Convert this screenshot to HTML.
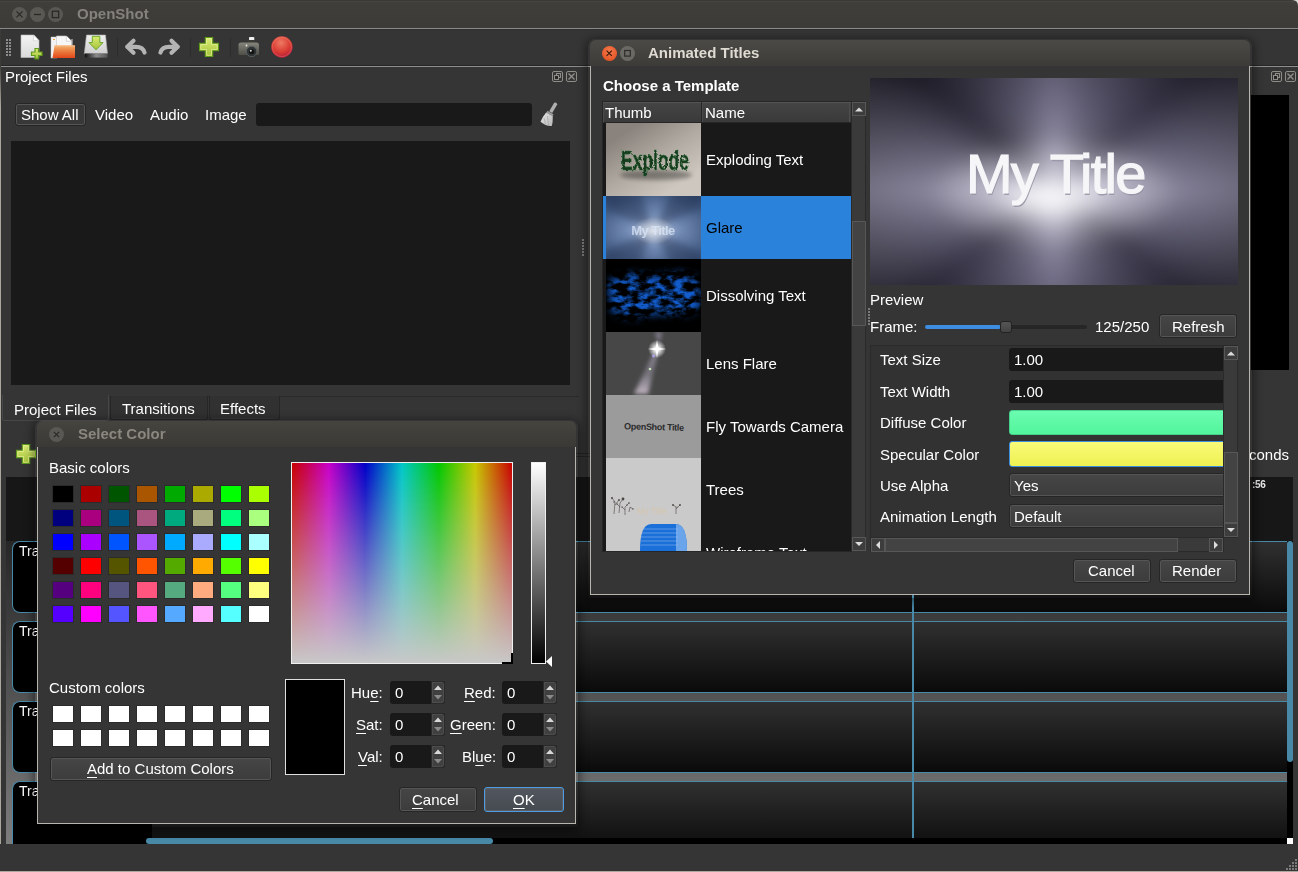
<!DOCTYPE html><html><head><meta charset="utf-8"><title>OpenShot</title><style>
*{margin:0;padding:0;box-sizing:border-box}
html,body{width:1298px;height:872px;overflow:hidden}
body{background:#353535;font-family:"Liberation Sans",sans-serif;font-size:15px;color:#fff;position:relative;line-height:17px}
.a{position:absolute}
.t{position:absolute;white-space:nowrap;line-height:17px;will-change:transform}
.b{font-weight:bold}
u{text-decoration:underline;text-underline-offset:2.5px;text-decoration-thickness:1px}
</style></head><body>
<div class="a" style="left:0px;top:0px;width:1298px;height:28px;background:linear-gradient(#3a3935 0px,#3a3935 1px,#46453f 1px,#46453f 2px,#3f3e3a 2px,#3c3b37 28px);border-radius:0 6px 0 0"></div>
<svg class="a" style="left:1290px;top:0" width="8" height="8"><path d="M2 0 H8 V6 Q8 0 2 0Z" fill="#d8d8d8"/></svg>
<div class="a" style="left:12.0px;top:6.9px;width:15px;height:15px;border-radius:50%;background:#5a5853"></div>
<div class="a" style="left:30.0px;top:6.9px;width:15px;height:15px;border-radius:50%;background:#5a5853"></div>
<div class="a" style="left:48.0px;top:6.9px;width:15px;height:15px;border-radius:50%;background:#5a5853"></div>
<svg class="a" style="left:0;top:0" width="70" height="28"><g stroke="#2a2926" stroke-width="1.3" fill="none"><path d="M16.5 11.4 L22.5 17.4 M22.5 11.4 L16.5 17.4"/><path d="M34 14.5 H41"/><rect x="52.3" y="11.2" width="6.4" height="6.4"/></g></svg>
<div class="t b" style="left:77px;top:5px;color:#85827d">OpenShot</div>
<div class="a" style="left:0px;top:28px;width:1298px;height:1px;background:#8a8a8a"></div>
<div class="a" style="left:0px;top:65px;width:1298px;height:1px;background:#262626"></div>
<div class="a" style="left:0px;top:66px;width:1298px;height:1px;background:#8e8e8e"></div>
<div class="a" style="left:0px;top:29px;width:1298px;height:1px;background:#2f2f2f"></div>
<div class="a" style="left:0px;top:29px;width:1px;height:38px;background:#3c3b37"></div>
<div class="a" style="left:0px;top:67px;width:1px;height:40px;background:linear-gradient(#46443f,#aca79e)"></div>
<div class="a" style="left:0px;top:107px;width:1px;height:765px;background:#aca79e"></div>
<svg class="a" style="left:0;top:29px" width="300" height="37" viewBox="0 29 300 37">
<defs>
<linearGradient id="gpage" x1="0" y1="0" x2="0" y2="1"><stop offset="0" stop-color="#f4f4f4"/><stop offset="1" stop-color="#dadada"/></linearGradient>
<linearGradient id="gplus" x1="0" y1="0" x2="0" y2="1"><stop offset="0" stop-color="#dbec74"/><stop offset="1" stop-color="#a4c23a"/></linearGradient>
<linearGradient id="gfold" x1="0" y1="0" x2="0" y2="1"><stop offset="0" stop-color="#f3b77a"/><stop offset="0.35" stop-color="#ee8a4a"/><stop offset="1" stop-color="#e4461a"/></linearGradient>
<linearGradient id="gdrive" x1="0" y1="0" x2="0" y2="1"><stop offset="0" stop-color="#f0f0f0"/><stop offset="1" stop-color="#cfcfcf"/></linearGradient>
<linearGradient id="gband" x1="0" y1="0" x2="1" y2="0"><stop offset="0" stop-color="#111"/><stop offset="0.5" stop-color="#8a8a8a"/><stop offset="1" stop-color="#555"/></linearGradient>
<radialGradient id="gred" cx="0.45" cy="0.3" r="0.75"><stop offset="0" stop-color="#ee7a62"/><stop offset="0.6" stop-color="#d93a32"/><stop offset="1" stop-color="#b0183e"/></radialGradient>
<linearGradient id="gcam" x1="0" y1="0" x2="0" y2="1"><stop offset="0" stop-color="#85857c"/><stop offset="1" stop-color="#4e4e48"/></linearGradient>
</defs>
<g fill="#8c8c8c"><rect x="6" y="39" width="2" height="2"/><rect x="9" y="39" width="2" height="2"/><rect x="6" y="42" width="2" height="2"/><rect x="9" y="42" width="2" height="2"/><rect x="6" y="45" width="2" height="2"/><rect x="9" y="45" width="2" height="2"/><rect x="6" y="48" width="2" height="2"/><rect x="9" y="48" width="2" height="2"/><rect x="6" y="51" width="2" height="2"/><rect x="9" y="51" width="2" height="2"/><rect x="6" y="54" width="2" height="2"/><rect x="9" y="54" width="2" height="2"/></g>
<path d="M21 35 H34 L39 40.5 V57.5 H21 Z" fill="url(#gpage)" stroke="#bdbdbd" stroke-width="0.6"/>
<path d="M33.5 35 V40.8 H39 Z" fill="#fff" stroke="#c8c8c8" stroke-width="0.6"/>
<path d="M35 48.5 H38.5 V52 H42 V55.5 H38.5 V58.8 H35 V55.5 H31.5 V52 H35 Z" fill="url(#gplus)" stroke="#5f9a1c" stroke-width="1.2"/>
<path d="M51 37 H57 V58 H51 Z" fill="#f2f2f2" stroke="#c4c4c4" stroke-width="0.5"/>
<path d="M56.5 36 H66.5 L71.5 41 V50 H56.5 Z" fill="#f7f7f7" stroke="#c8c8c8" stroke-width="0.6"/>
<path d="M66.3 36 V41.2 H71.5" fill="#fff" stroke="#bdbdbd" stroke-width="0.6"/>
<rect x="71.5" y="39" width="1" height="11" fill="#d8d8d8"/>
<rect x="53" y="39" width="2" height="0.9" fill="#f0a030"/>
<path d="M54.5 45.2 H75 V58 H52.5 Z" fill="url(#gfold)"/>
<path d="M55 46 H74.5" stroke="#f8c890" stroke-width="0.8" opacity="0.8"/>
<path d="M86.5 35 H105.5 L107.5 53.6 H84.3 Z" fill="url(#gdrive)" stroke="#aaa" stroke-width="0.6"/>
<ellipse cx="96" cy="47" rx="9" ry="5" fill="none" stroke="#d8d8d8" stroke-width="1"/>
<rect x="85" y="53.6" width="22.5" height="4" fill="url(#gband)"/>
<path d="M92.3 36.3 H99.8 V42.6 H103 L96 49.8 L89 42.6 H92.3 Z" fill="url(#gplus)" stroke="#6aa82a" stroke-width="1"/>
<rect x="117" y="38" width="1" height="19" fill="#2c2c2c"/>
<rect x="190" y="38" width="1" height="19" fill="#2c2c2c"/>
<rect x="230" y="38" width="1" height="19" fill="#2c2c2c"/>
<g fill="none" stroke="#b4b4b4" stroke-width="4.2" stroke-linecap="round" stroke-linejoin="round">
<path d="M127.5 46.8 H136 Q143 46.8 144.5 52.5"/><path d="M133.5 40.8 L127.3 46.8 L133.5 52.8"/>
<path d="M177.5 46.8 H169 Q162 46.8 160.5 52.5"/><path d="M171.5 40.8 L177.7 46.8 L171.5 52.8"/>
</g>
<path d="M205.3 37.5 H212.7 V43.3 H218.5 V50.7 H212.7 V56.5 H205.3 V50.7 H199.5 V43.3 H205.3 Z" fill="url(#gplus)" stroke="#5f9a1c" stroke-width="1.1"/>
<path d="M206.5 38.8 H211.5 V44.5 H217.2 V49.5 H211.5 V55.3 H206.5 V49.5 H200.8 V44.5 H206.5 Z" fill="none" stroke="#eef7a8" stroke-width="0.7" opacity="0.8"/>
<rect x="249" y="37" width="5.3" height="3.3" rx="0.8" fill="#eee"/>
<rect x="248" y="40" width="7" height="2.5" fill="#3a3a36"/>
<path d="M238.5 44.5 Q238.5 42.5 241 42.5 H256.5 Q259 42.5 259 45 V54 Q259 55 258 55 H239.5 Q238.5 55 238.5 54 Z" fill="url(#gcam)"/>
<circle cx="251.6" cy="51.5" r="5.2" fill="#2e3436" stroke="#5a5f60" stroke-width="1"/>
<circle cx="251.6" cy="51.5" r="2.6" fill="#111"/>
<circle cx="250.8" cy="50.8" r="1" fill="#ddd"/>
<circle cx="246.5" cy="45.5" r="0.9" fill="#eee"/>
<circle cx="281.9" cy="47" r="10.7" fill="url(#gred)"/>
<circle cx="281.9" cy="47" r="9.6" fill="none" stroke="#f7a090" stroke-width="0.5" opacity="0.6"/>
</svg>
<div class="t " style="left:5px;top:68px;">Project Files</div>
<svg class="a" style="left:552px;top:70px" width="27" height="14"><g fill="none" stroke="#8e8d88" stroke-width="1"><rect x="0.5" y="1.5" width="10" height="10" rx="1.5"/><rect x="4.5" y="3.5" width="4" height="4"/><rect x="2.5" y="5.5" width="4" height="4" fill="#262626"/><rect x="14.5" y="1.5" width="10" height="10" rx="1.5"/><path d="M16.5 3.5 L22.5 9.5 M22.5 3.5 L16.5 9.5" stroke-width="1.4"/></g></svg>
<svg class="a" style="left:1271px;top:70px" width="27" height="14"><g fill="none" stroke="#8e8d88" stroke-width="1"><rect x="0.5" y="1.5" width="10" height="10" rx="1.5"/><rect x="4.5" y="3.5" width="4" height="4"/><rect x="2.5" y="5.5" width="4" height="4" fill="#262626"/><rect x="14.5" y="1.5" width="10" height="10" rx="1.5"/><path d="M16.5 3.5 L22.5 9.5 M22.5 3.5 L16.5 9.5" stroke-width="1.4"/></g></svg>
<svg class="a" style="left:582px;top:239px" width="2" height="17"><g fill="#7a7a7a"><rect x="0" y="0" width="2" height="2"/><rect x="0" y="3" width="2" height="2"/><rect x="0" y="6" width="2" height="2"/><rect x="0" y="9" width="2" height="2"/><rect x="0" y="12" width="2" height="2"/><rect x="0" y="15" width="2" height="2"/></g></svg>
<div class="a" style="left:15px;top:103px;width:71px;height:23px;background:#383838;border:1px solid #262626;box-shadow:inset 0 0 0 1px #555;border-radius:3px"></div>
<div class="t " style="left:21px;top:106px;">Show All</div>
<div class="t " style="left:95px;top:106px;">Video</div>
<div class="t " style="left:150px;top:106px;">Audio</div>
<div class="t " style="left:205px;top:106px;">Image</div>
<div class="a" style="left:256px;top:103px;width:276px;height:23px;background:#191919;border-radius:3px"></div>
<div class="a" style="left:11px;top:141px;width:559px;height:244px;background:#191919"></div>
<div class="a" style="left:108px;top:396px;width:471px;height:1px;background:#2b2b2b"></div>
<div class="a" style="left:2px;top:395px;width:107px;height:26px;border:1px solid #474747;border-top:none;border-radius:0 0 3px 3px;background:#353535"></div>
<div class="a" style="left:110px;top:396px;width:98px;height:24px;border:1px solid #262626;border-top:none;border-radius:0 0 3px 3px;background:#313131;box-shadow:inset 0 -1px 0 #3a3a3a"></div>
<div class="a" style="left:209px;top:396px;width:71px;height:24px;border:1px solid #262626;border-top:none;border-radius:0 0 3px 3px;background:#313131;box-shadow:inset 0 -1px 0 #3a3a3a"></div>
<div class="t " style="left:14px;top:401px;">Project Files</div>
<div class="t " style="left:122px;top:400px;">Transitions</div>
<div class="t " style="left:220px;top:400px;">Effects</div>
<svg class="a" style="left:536px;top:100px" width="26" height="28" viewBox="536 100 26 28"><defs><linearGradient id="brg" x1="0" y1="0" x2="1" y2="1"><stop offset="0" stop-color="#e6e6e6"/><stop offset="1" stop-color="#b8b8b8"/></linearGradient></defs>
<path d="M554.2 102.8 Q556.8 102 557.2 104.5 L552.2 113 L549.2 111.2 Z" fill="#b0b0b0"/>
<path d="M547.5 110.8 L553.5 114.2 L552.6 116.2 L546.3 112.6 Z" fill="#9a9a9a"/>
<path d="M546.2 112.5 L552.8 116.3 Q553 122 551.8 126 Q546 126.5 540.5 121.8 Q543 116 546.2 112.5 Z" fill="url(#brg)"/>
<path d="M544 118 L545.5 124 M547.5 116 L548.5 125" stroke="#9a9a9a" stroke-width="0.6"/>
</svg>
<svg class="a" style="left:15px;top:443px" width="22" height="22" viewBox="15 443 22 22"><defs><linearGradient id="gplus2" x1="0" y1="0" x2="0" y2="1"><stop offset="0" stop-color="#dbec74"/><stop offset="1" stop-color="#a4c23a"/></linearGradient></defs>
<path d="M22.3 444.5 H29.7 V450.3 H35.5 V457.7 H29.7 V463.5 H22.3 V457.7 H16.5 V450.3 H22.3 Z" fill="url(#gplus2)" stroke="#5f9a1c" stroke-width="1.1"/>
<path d="M23.5 445.8 H28.5 V451.5 H34.2 V456.5 H28.5 V462.3 H23.5 V456.5 H17.8 V451.5 H23.5 Z" fill="none" stroke="#eef7a8" stroke-width="0.7" opacity="0.8"/></svg>
<div class="a" style="left:1251px;top:95px;width:38px;height:275px;background:#000"></div>
<div class="a" style="left:6px;top:477px;width:1287px;height:367px;background:linear-gradient(#141414,#7d7d7d)"></div>
<div class="a" style="left:6px;top:477px;width:1287px;height:64px;background:#171717"></div>
<div class="a" style="left:146px;top:541px;width:1141px;height:72px;background:linear-gradient(#303030 0px,#0a0a0a 70px);border-top:1px solid #4889a8;border-bottom:1px solid #4889a8;"></div>
<div class="a" style="left:12px;top:541px;width:140px;height:72px;background:#000;border:1px solid #4889a8;border-right:none;border-radius:8px 0 0 8px"></div>
<div class="t " style="left:19px;top:543px;font-size:14px">Tra</div>
<div class="a" style="left:146px;top:621px;width:1141px;height:72px;background:linear-gradient(#303030 0px,#0a0a0a 70px);border-top:1px solid #4889a8;border-bottom:1px solid #4889a8;"></div>
<div class="a" style="left:12px;top:621px;width:140px;height:72px;background:#000;border:1px solid #4889a8;border-right:none;border-radius:8px 0 0 8px"></div>
<div class="t " style="left:19px;top:623px;font-size:14px">Tra</div>
<div class="a" style="left:146px;top:701px;width:1141px;height:72px;background:linear-gradient(#303030 0px,#0a0a0a 70px);border-top:1px solid #4889a8;border-bottom:1px solid #4889a8;"></div>
<div class="a" style="left:12px;top:701px;width:140px;height:72px;background:#000;border:1px solid #4889a8;border-right:none;border-radius:8px 0 0 8px"></div>
<div class="t " style="left:19px;top:703px;font-size:14px">Tra</div>
<div class="a" style="left:146px;top:781px;width:1141px;height:63px;background:linear-gradient(#303030 0px,#0a0a0a 70px);border-top:1px solid #4889a8;"></div>
<div class="a" style="left:12px;top:781px;width:140px;height:63px;background:#000;border:1px solid #4889a8;border-right:none;border-bottom:none;border-radius:8px 0 0 0"></div>
<div class="t " style="left:19px;top:783px;font-size:14px">Tra</div>
<div class="a" style="left:912px;top:541px;width:2px;height:303px;background:#4889a8"></div>
<div class="a" style="left:1287px;top:541px;width:6px;height:303px;background:#000"></div>
<div class="a" style="left:1287px;top:541px;width:6px;height:221px;background:#4889a8;border-radius:3px"></div>
<div class="a" style="left:146px;top:838px;width:1141px;height:6px;background:#000"></div>
<div class="a" style="left:146px;top:838px;width:347px;height:6px;background:#4889a8;border-radius:3px"></div>
<div class="a" style="left:1287px;top:838px;width:6px;height:6px;background:#fff"></div>
<div class="t " style="left:1249px;top:446px;">conds</div>
<div class="a" style="left:576px;top:453px;width:14px;height:1px;background:#262626"></div>
<div class="a" style="left:576px;top:456px;width:14px;height:1px;background:#262626"></div>
<div class="t " style="left:1252px;top:476px;font-size:10px;font-weight:bold;color:#e8e8e8;letter-spacing:-0.3px">:56</div>
<div class="a" style="left:0px;top:844px;width:1298px;height:28px;background:#353535"></div>
<div class="a" style="left:0px;top:871px;width:1298px;height:1px;background:#aca79e"></div>
<svg class="a" style="left:1280px;top:855px" width="18" height="16" viewBox="1280 855 18 16"><g fill="#7a7a7a"><rect x="1295" y="859" width="2" height="2"/><rect x="1295" y="862" width="2" height="2"/><rect x="1292" y="862" width="2" height="2"/><rect x="1295" y="865" width="2" height="2"/><rect x="1292" y="865" width="2" height="2"/><rect x="1289" y="865" width="2" height="2"/><rect x="1295" y="868" width="2" height="2"/><rect x="1292" y="868" width="2" height="2"/><rect x="1289" y="868" width="2" height="2"/><rect x="1286" y="868" width="2" height="2"/></g></svg>
<div class="a" style="left:588px;top:39px;width:664px;height:559px;border-radius:7px 7px 2px 2px;box-shadow:0 2px 10px 2px rgba(0,0,0,.45)"></div>
<div class="a" style="left:590px;top:40px;width:660px;height:26px;background:linear-gradient(#4b4a46,#3c3b37);border-radius:6px 6px 0 0"></div>
<div class="a" style="left:590px;top:66px;width:660px;height:529px;background:#353535;border-left:1px solid #b8b5ae;border-right:1px solid #b8b5ae;border-bottom:1px solid #b8b5ae"></div>
<div class="a" style="left:601.7px;top:45.8px;width:15px;height:15px;border-radius:50%;background:radial-gradient(circle at 50% 35%,#f47a4d,#e0491a)"></div>
<div class="a" style="left:620.0px;top:45.8px;width:15px;height:15px;border-radius:50%;background:#6b6964"></div>
<div class="t b" style="left:648px;top:44px;color:#dfdbd2">Animated Titles</div>
<svg class="a" style="left:600px;top:44px" width="40" height="20"><g stroke="#3a1a0a" stroke-width="1.2" fill="none"><path d="M6.6 6.7 L11.8 11.9 M11.8 6.7 L6.6 11.9"/></g><rect x="24.7" y="6.5" width="5.6" height="5.6" fill="none" stroke="#2e2d2a" stroke-width="1.2"/></svg>
<div class="t b" style="left:603px;top:77px;">Choose a Template</div>
<div class="a" style="left:602px;top:101px;width:250px;height:451px;background:#191919;border:1px solid #262626"></div>
<div class="a" style="left:603px;top:102px;width:248px;height:21px;background:linear-gradient(#444,#3a3a3a);border-top:1px solid #545454;border-left:1px solid #4a4a4a;border-bottom:1px solid #262626"></div>
<div class="a" style="left:701px;top:102px;width:1px;height:21px;background:#262626"></div>
<div class="a" style="left:702px;top:103px;width:1px;height:19px;background:#4a4a4a"></div>
<div class="a" style="left:849px;top:103px;width:1px;height:19px;background:#4e4e4e"></div>
<div class="t " style="left:605px;top:104px;">Thumb</div>
<div class="t " style="left:705px;top:104px;">Name</div>
<div class="a" style="left:603px;top:123px;width:248px;height:428px;overflow:hidden">
<div class="a" style="left:3px;top:0px;width:95px;height:73px;overflow:hidden"><svg width="95" height="73" viewBox="0 0 95 73"><defs><linearGradient id="exbg" x1="0" y1="0.3" x2="0.6" y2="1"><stop offset="0" stop-color="#8a837d"/><stop offset="0.5" stop-color="#b0a9a1"/><stop offset="1" stop-color="#cdc7bf"/></linearGradient>
<filter id="exf" x="-10%" y="-20%" width="120%" height="140%"><feTurbulence type="fractalNoise" baseFrequency="0.35" numOctaves="2" seed="5" result="n"/><feDisplacementMap in="SourceGraphic" in2="n" scale="3.5"/></filter>
<filter id="exs" x="-20%" y="-50%" width="140%" height="200%"><feGaussianBlur stdDeviation="2.2"/></filter></defs>
<rect width="95" height="73" fill="url(#exbg)"/>
<ellipse cx="50" cy="52" rx="36" ry="5" fill="#000" opacity="0.35" filter="url(#exs)"/>
<text x="15" y="47" textLength="68" lengthAdjust="spacingAndGlyphs" font-family="Liberation Sans" font-weight="bold" font-size="27" fill="#163a1e" stroke="#2f6a3a" stroke-width="0.7" filter="url(#exf)">Explode</text>
</svg></div>
<div class="t" style="left:103px;top:27.5px;color:#fff">Exploding Text</div>
<div class="a" style="left:0;top:73px;width:248px;height:63px;background:#2a82da"></div>
<div class="a" style="left:3px;top:73px;width:95px;height:63px;overflow:hidden"><svg width="95" height="63" viewBox="0 0 95 63"><defs><radialGradient id="glb" cx="0.5" cy="0.55" r="0.75"><stop offset="0" stop-color="#b8c8e4"/><stop offset="0.4" stop-color="#6f88b2"/><stop offset="1" stop-color="#2e466c"/></radialGradient>
<radialGradient id="glw" cx="0.5" cy="0.55" r="0.22"><stop offset="0" stop-color="#fff" stop-opacity="0.7"/><stop offset="1" stop-color="#fff" stop-opacity="0"/></radialGradient>
<filter id="glf" x="-20%" y="-20%" width="140%" height="140%"><feGaussianBlur stdDeviation="4"/></filter></defs>
<rect width="95" height="63" fill="url(#glb)"/>
<path d="M47.5 34 L0 14 V-5 H34 Z M47.5 34 L95 12 V-5 H66 Z M47.5 34 L0 54 V68 H34Z M47.5 34 L95 56 V68 H64Z" fill="#1a2a48" opacity="0.45" filter="url(#glf)"/>
<rect width="95" height="63" fill="url(#glw)"/>
<text x="47" y="39" text-anchor="middle" font-family="Liberation Sans" font-weight="bold" font-size="13" fill="#dbe6f8" opacity="0.75" letter-spacing="-0.6">My Title</text>
</svg></div>
<div class="t" style="left:103px;top:95.5px;color:#000">Glare</div>
<div class="a" style="left:3px;top:136px;width:95px;height:73px;overflow:hidden"><svg width="95" height="73" viewBox="0 0 95 73"><defs>
<filter id="dsf" x="-10%" y="-40%" width="120%" height="180%" color-interpolation-filters="sRGB"><feGaussianBlur in="SourceGraphic" stdDeviation="4" result="m"/><feTurbulence type="fractalNoise" baseFrequency="0.09 0.16" numOctaves="4" seed="21" result="n"/><feColorMatrix in="n" values="0 0 0 0 0.07  0 0 0 0 0.36  0 0 0 0 0.8  0 0 0 3.5 -1.35" result="c"/><feComposite in="c" in2="m" operator="in"/></filter></defs>
<rect width="95" height="73" fill="#000"/>
<path d="M2 24 Q20 10 48 18 Q75 8 94 22 L95 48 Q80 60 50 54 Q25 64 6 52 Z" fill="#fff" filter="url(#dsf)"/>
</svg></div>
<div class="t" style="left:103px;top:163.5px;color:#fff">Dissolving Text</div>
<div class="a" style="left:3px;top:209px;width:95px;height:63px;overflow:hidden"><svg width="95" height="63" viewBox="0 0 95 63"><defs><radialGradient id="lfs" cx="0.5" cy="0.5" r="0.5"><stop offset="0" stop-color="#fff"/><stop offset="0.3" stop-color="#fff" stop-opacity="0.85"/><stop offset="1" stop-color="#fff" stop-opacity="0"/></radialGradient>
<linearGradient id="lfr" x1="0" y1="0" x2="0" y2="1"><stop offset="0" stop-color="#d8d0e8" stop-opacity="0.5"/><stop offset="0.5" stop-color="#c8c0d8" stop-opacity="0.35"/><stop offset="1" stop-color="#e0d0e0" stop-opacity="0.8"/></linearGradient>
<filter id="lfb" x="-50%" y="-20%" width="200%" height="140%"><feGaussianBlur stdDeviation="2.2"/></filter></defs>
<rect width="95" height="63" fill="#474747"/>
<path d="M49 0 L56 0 L53 12 Z" fill="#a098b0" opacity="0.7" filter="url(#lfb)"/>
<path d="M48 20 L52 20 L42 62 L28 62 Z" fill="url(#lfr)" filter="url(#lfb)"/>
<circle cx="51" cy="17" r="9" fill="url(#lfs)"/>
<path d="M51 8 L52.3 15.7 L60 17 L52.3 18.3 L51 26 L49.7 18.3 L42 17 L49.7 15.7 Z" fill="#fff"/>
<circle cx="47.5" cy="24" r="1.5" fill="#b0a8ff" opacity="0.8"/>
<circle cx="44" cy="37" r="1.3" fill="#d0f0c0" opacity="0.9"/>
</svg></div>
<div class="t" style="left:103px;top:231.5px;color:#fff">Lens Flare</div>
<div class="a" style="left:3px;top:272px;width:95px;height:63px;overflow:hidden"><svg width="95" height="63" viewBox="0 0 95 63"><rect width="95" height="63" fill="#9b9b9b"/>
<text x="48" y="35" text-anchor="middle" font-family="Liberation Sans" font-weight="bold" font-size="9" fill="#2c2c2c" letter-spacing="-0.3" transform="rotate(1.5 48 32)">OpenShot Title</text></svg></div>
<div class="t" style="left:103px;top:294.5px;color:#fff">Fly Towards Camera</div>
<div class="a" style="left:3px;top:335px;width:95px;height:63px;overflow:hidden"><svg width="95" height="63" viewBox="0 0 95 63"><rect width="95" height="63" fill="#cacaca"/>
<g stroke="#4a4540" stroke-width="0.6" fill="none"><path d="M8 56 L9 44 L6 40 M9 47 L13 42 M13 55 L14 45 L17 41 M14 49 L11 46 M19 57 L19 49 L23 45 M19 52 L16 49 M23 54 L24 49 L27 51 M70 56 L70 49 L67 47 M70 51 L74 47"/></g>
<g fill="#4a4540"><circle cx="6" cy="40" r="1"/><circle cx="8" cy="44" r="0.7"/><circle cx="13" cy="42" r="0.9"/><circle cx="17" cy="41" r="1.4"/><circle cx="11" cy="46" r="0.7"/><circle cx="23" cy="45" r="0.8"/><circle cx="16" cy="49" r="0.7"/><circle cx="21" cy="47" r="0.7"/><circle cx="27" cy="51" r="0.7"/><circle cx="67" cy="47" r="0.9"/><circle cx="74" cy="47" r="0.9"/><circle cx="71" cy="49" r="0.6"/></g>
<text x="46" y="56" text-anchor="middle" font-family="Liberation Sans" font-size="8.5" fill="#d6c6ae">My Title</text></svg></div>
<div class="t" style="left:103px;top:357.5px;color:#fff">Trees</div>
<div class="a" style="left:3px;top:398px;width:95px;height:63px;overflow:hidden"><svg width="95" height="63" viewBox="0 0 95 63"><rect width="95" height="63" fill="#cacaca"/>
<path d="M34 30 Q34 3 45 3 H70 Q81 3 81 30 V63 H34 Z" fill="#1a6fd8"/>
<path d="M70 3 Q81 3 81 30 V63 H70 Z" fill="#6aa4ea"/>
<g stroke="#9cc4f4" stroke-width="0.5"><path d="M36 8 H72 M35 12 H72 M35 16 H72 M35 20 H72 M35 24 H72"/></g>
</svg></div>
<div class="t" style="left:103px;top:420.5px;color:#fff">Wireframe Text</div>
</div>
<div class="a" style="left:851px;top:101px;width:15px;height:450px;background:#3a3a3a;border:1px solid #2a2a2a"></div>
<div class="a" style="left:852px;top:102px;width:14px;height:14px;background:#3d3d3d;border:1px solid #575757"></div>
<svg class="a" style="left:852px;top:102px" width="14" height="14"><path d="M3 9.5 L7 5.5 L11 9.5Z" fill="#dcdcdc"/></svg>
<div class="a" style="left:852px;top:221px;width:14px;height:105px;background:#434343;border:1px solid #575757"></div>
<div class="a" style="left:852px;top:537px;width:14px;height:14px;background:#3d3d3d;border:1px solid #575757"></div>
<svg class="a" style="left:852px;top:537px" width="14" height="14"><path d="M3 5 L7 9 L11 5Z" fill="#dcdcdc"/></svg>
<div class="a" style="left:870px;top:78px;width:368px;height:207px;overflow:hidden;background:#3a3650"><div class="a" style="left:-40px;top:-40px;width:448px;height:287px;filter:blur(9px);background:radial-gradient(ellipse 14% 9% at 49% 56%,rgba(255,255,255,1),rgba(255,255,255,0)),radial-gradient(ellipse 28% 20% at 50% 54%,rgba(240,238,250,.85),rgba(240,238,250,0)),conic-gradient(from 0deg at 50% 53%,rgba(255,255,255,.14) 0deg,rgba(0,0,0,.38) 50deg,rgba(255,255,255,.22) 90deg,rgba(0,0,0,.42) 128deg,rgba(255,255,255,.14) 180deg,rgba(0,0,0,.4) 232deg,rgba(255,255,255,.25) 270deg,rgba(0,0,0,.5) 310deg,rgba(255,255,255,.14) 360deg),radial-gradient(ellipse 62% 62% at 50% 53%,#aca8be,#5e5a78 50%,#201d2a 100%)"></div><div class="t" style="left:96px;top:61px;font-size:56px;line-height:70px;color:#f6f6f8;letter-spacing:-1.8px;-webkit-text-stroke:1.2px #f6f6f8;text-shadow:1px 2px 0 rgba(150,150,165,.9)">My Title</div></div>
<div class="t " style="left:870px;top:291px;">Preview</div>
<svg class="a" style="left:868px;top:308px" width="2" height="17"><g fill="#7a7a7a"><rect x="0" y="0" width="2" height="2"/><rect x="0" y="3" width="2" height="2"/><rect x="0" y="6" width="2" height="2"/><rect x="0" y="9" width="2" height="2"/><rect x="0" y="12" width="2" height="2"/><rect x="0" y="15" width="2" height="2"/></g></svg>
<div class="t " style="left:870px;top:318px;">Frame:</div>
<div class="a" style="left:925px;top:325px;width:162px;height:4px;background:#262626;border-radius:2px"></div>
<div class="a" style="left:925px;top:325px;width:76px;height:4px;background:#3d8ee0;border-radius:2px"></div>
<div class="a" style="left:1000px;top:321px;width:12px;height:12px;background:linear-gradient(#555,#444);border:1px solid #222;border-radius:3px"></div>
<div class="t " style="left:1095px;top:318px;">125/250</div>
<div class="a" style="left:1159px;top:314px;width:78px;height:24px;background:linear-gradient(#464646,#3c3c3c);border:1px solid #262626;box-shadow:inset 0 0 0 1px #555;border-radius:3px"></div>
<div class="t " style="left:1172px;top:318px;">Refresh</div>
<div class="a" style="left:870px;top:345px;width:367px;height:206px;background:#323232;border:1px solid #2a2a2a"></div>
<div class="t " style="left:880px;top:351.0px;">Text Size</div>
<div class="t " style="left:880px;top:383.0px;">Text Width</div>
<div class="t " style="left:880px;top:414.0px;">Diffuse Color</div>
<div class="t " style="left:880px;top:445.5px;">Specular Color</div>
<div class="t " style="left:880px;top:476.5px;">Use Alpha</div>
<div class="t " style="left:880px;top:507.5px;">Animation Length</div>
<div class="a" style="left:871px;top:346px;width:352px;height:191px;overflow:hidden">
<div class="a" style="left:138px;top:2px;width:240px;height:23px;background:#191919;border-radius:3px"></div>
<div class="t" style="left:143px;top:5.0px">1.00</div>
<div class="a" style="left:138px;top:34px;width:240px;height:23px;background:#191919;border-radius:3px"></div>
<div class="t" style="left:143px;top:37.0px">1.00</div>
<div class="a" style="left:138px;top:64px;width:240px;height:25px;background:linear-gradient(#6bfcb0,#52f59c);border:1px solid #45d08a;border-radius:3px"></div>
<div class="a" style="left:138px;top:95px;width:240px;height:26px;background:linear-gradient(#f9fa78,#eff152);border:1px solid #3d8ee0;border-radius:3px"></div>
<div class="a" style="left:138px;top:127px;width:240px;height:24px;background:linear-gradient(#464646,#3c3c3c);border:1px solid #262626;box-shadow:inset 0 0 0 1px #545454;border-radius:3px"></div>
<div class="t" style="left:143px;top:130.5px">Yes</div>
<div class="a" style="left:138px;top:158px;width:240px;height:24px;background:linear-gradient(#464646,#3c3c3c);border:1px solid #262626;box-shadow:inset 0 0 0 1px #545454;border-radius:3px"></div>
<div class="t" style="left:143px;top:161.5px">Default</div>
</div>
<div class="a" style="left:1223px;top:345px;width:15px;height:193px;background:#3a3a3a;border:1px solid #2a2a2a"></div>
<div class="a" style="left:1224px;top:346px;width:14px;height:14px;background:#3d3d3d;border:1px solid #575757"></div>
<svg class="a" style="left:1224px;top:346px" width="14" height="14"><path d="M3 9.5 L7 5.5 L11 9.5Z" fill="#dcdcdc"/></svg>
<div class="a" style="left:1224px;top:452px;width:14px;height:71px;background:#434343;border:1px solid #575757"></div>
<div class="a" style="left:1224px;top:523px;width:14px;height:14px;background:#3d3d3d;border:1px solid #575757"></div>
<svg class="a" style="left:1224px;top:523px" width="14" height="14"><path d="M3 5 L7 9 L11 5Z" fill="#dcdcdc"/></svg>
<div class="a" style="left:870px;top:537px;width:354px;height:15px;background:#3a3a3a;border:1px solid #2a2a2a"></div>
<div class="a" style="left:871px;top:538px;width:14px;height:14px;background:#3d3d3d;border:1px solid #575757"></div>
<svg class="a" style="left:871px;top:538px" width="14" height="14"><path d="M9 3 L5 7 L9 11Z" fill="#dcdcdc"/></svg>
<div class="a" style="left:885px;top:538px;width:293px;height:14px;background:#434343;border:1px solid #575757"></div>
<div class="a" style="left:1209px;top:538px;width:14px;height:14px;background:#3d3d3d;border:1px solid #575757"></div>
<svg class="a" style="left:1209px;top:538px" width="14" height="14"><path d="M5 3 L9 7 L5 11Z" fill="#dcdcdc"/></svg>
<div class="a" style="left:1224px;top:538px;width:13px;height:13px;background:#353535"></div>
<div class="a" style="left:1073px;top:559px;width:78px;height:24px;background:linear-gradient(#464646,#3c3c3c);border:1px solid #262626;box-shadow:inset 0 0 0 1px #555;border-radius:3px"></div>
<div class="t " style="left:1088px;top:562px;">Cancel</div>
<div class="a" style="left:1159px;top:559px;width:78px;height:24px;background:linear-gradient(#464646,#3c3c3c);border:1px solid #262626;box-shadow:inset 0 0 0 1px #555;border-radius:3px"></div>
<div class="t " style="left:1172px;top:562px;">Render</div>
<div class="a" style="left:35px;top:420px;width:543px;height:407px;border-radius:7px 7px 2px 2px;box-shadow:0 2px 10px 2px rgba(0,0,0,.45)"></div>
<div class="a" style="left:37px;top:421px;width:539px;height:26px;background:linear-gradient(#45443f,#3a3935);border-radius:6px 6px 0 0"></div>
<div class="a" style="left:37px;top:447px;width:539px;height:377px;background:#353535;border-left:1px solid #b8b5ae;border-right:1px solid #b8b5ae;border-bottom:1px solid #b8b5ae"></div>
<div class="a" style="left:49.0px;top:427.0px;width:15px;height:15px;border-radius:50%;background:#5a5853"></div>
<div class="t b" style="left:78px;top:425px;color:#8a877f">Select Color</div>
<svg class="a" style="left:49px;top:427px" width="15" height="15"><path d="M4.8 4.8 L10.2 10.2 M10.2 4.8 L4.8 10.2" stroke="#2a2926" stroke-width="1.2"/></svg>
<div class="t " style="left:49px;top:459px;">Basic colors</div>
<div class="a" style="left:52px;top:485px;width:22px;height:18px;background:rgb(0, 0, 0);border:1px solid #2b2b2b"></div>
<div class="a" style="left:52px;top:509px;width:22px;height:18px;background:rgb(0, 0, 127);border:1px solid #2b2b2b"></div>
<div class="a" style="left:52px;top:533px;width:22px;height:18px;background:rgb(0, 0, 255);border:1px solid #2b2b2b"></div>
<div class="a" style="left:52px;top:557px;width:22px;height:18px;background:rgb(85, 0, 0);border:1px solid #2b2b2b"></div>
<div class="a" style="left:52px;top:581px;width:22px;height:18px;background:rgb(85, 0, 127);border:1px solid #2b2b2b"></div>
<div class="a" style="left:52px;top:605px;width:22px;height:18px;background:rgb(85, 0, 255);border:1px solid #2b2b2b"></div>
<div class="a" style="left:80px;top:485px;width:22px;height:18px;background:rgb(170, 0, 0);border:1px solid #2b2b2b"></div>
<div class="a" style="left:80px;top:509px;width:22px;height:18px;background:rgb(170, 0, 127);border:1px solid #2b2b2b"></div>
<div class="a" style="left:80px;top:533px;width:22px;height:18px;background:rgb(170, 0, 255);border:1px solid #2b2b2b"></div>
<div class="a" style="left:80px;top:557px;width:22px;height:18px;background:rgb(255, 0, 0);border:1px solid #2b2b2b"></div>
<div class="a" style="left:80px;top:581px;width:22px;height:18px;background:rgb(255, 0, 127);border:1px solid #2b2b2b"></div>
<div class="a" style="left:80px;top:605px;width:22px;height:18px;background:rgb(255, 0, 255);border:1px solid #2b2b2b"></div>
<div class="a" style="left:108px;top:485px;width:22px;height:18px;background:rgb(0, 85, 0);border:1px solid #2b2b2b"></div>
<div class="a" style="left:108px;top:509px;width:22px;height:18px;background:rgb(0, 85, 127);border:1px solid #2b2b2b"></div>
<div class="a" style="left:108px;top:533px;width:22px;height:18px;background:rgb(0, 85, 255);border:1px solid #2b2b2b"></div>
<div class="a" style="left:108px;top:557px;width:22px;height:18px;background:rgb(85, 85, 0);border:1px solid #2b2b2b"></div>
<div class="a" style="left:108px;top:581px;width:22px;height:18px;background:rgb(85, 85, 127);border:1px solid #2b2b2b"></div>
<div class="a" style="left:108px;top:605px;width:22px;height:18px;background:rgb(85, 85, 255);border:1px solid #2b2b2b"></div>
<div class="a" style="left:136px;top:485px;width:22px;height:18px;background:rgb(170, 85, 0);border:1px solid #2b2b2b"></div>
<div class="a" style="left:136px;top:509px;width:22px;height:18px;background:rgb(170, 85, 127);border:1px solid #2b2b2b"></div>
<div class="a" style="left:136px;top:533px;width:22px;height:18px;background:rgb(170, 85, 255);border:1px solid #2b2b2b"></div>
<div class="a" style="left:136px;top:557px;width:22px;height:18px;background:rgb(255, 85, 0);border:1px solid #2b2b2b"></div>
<div class="a" style="left:136px;top:581px;width:22px;height:18px;background:rgb(255, 85, 127);border:1px solid #2b2b2b"></div>
<div class="a" style="left:136px;top:605px;width:22px;height:18px;background:rgb(255, 85, 255);border:1px solid #2b2b2b"></div>
<div class="a" style="left:164px;top:485px;width:22px;height:18px;background:rgb(0, 170, 0);border:1px solid #2b2b2b"></div>
<div class="a" style="left:164px;top:509px;width:22px;height:18px;background:rgb(0, 170, 127);border:1px solid #2b2b2b"></div>
<div class="a" style="left:164px;top:533px;width:22px;height:18px;background:rgb(0, 170, 255);border:1px solid #2b2b2b"></div>
<div class="a" style="left:164px;top:557px;width:22px;height:18px;background:rgb(85, 170, 0);border:1px solid #2b2b2b"></div>
<div class="a" style="left:164px;top:581px;width:22px;height:18px;background:rgb(85, 170, 127);border:1px solid #2b2b2b"></div>
<div class="a" style="left:164px;top:605px;width:22px;height:18px;background:rgb(85, 170, 255);border:1px solid #2b2b2b"></div>
<div class="a" style="left:192px;top:485px;width:22px;height:18px;background:rgb(170, 170, 0);border:1px solid #2b2b2b"></div>
<div class="a" style="left:192px;top:509px;width:22px;height:18px;background:rgb(170, 170, 127);border:1px solid #2b2b2b"></div>
<div class="a" style="left:192px;top:533px;width:22px;height:18px;background:rgb(170, 170, 255);border:1px solid #2b2b2b"></div>
<div class="a" style="left:192px;top:557px;width:22px;height:18px;background:rgb(255, 170, 0);border:1px solid #2b2b2b"></div>
<div class="a" style="left:192px;top:581px;width:22px;height:18px;background:rgb(255, 170, 127);border:1px solid #2b2b2b"></div>
<div class="a" style="left:192px;top:605px;width:22px;height:18px;background:rgb(255, 170, 255);border:1px solid #2b2b2b"></div>
<div class="a" style="left:220px;top:485px;width:22px;height:18px;background:rgb(0, 255, 0);border:1px solid #2b2b2b"></div>
<div class="a" style="left:220px;top:509px;width:22px;height:18px;background:rgb(0, 255, 127);border:1px solid #2b2b2b"></div>
<div class="a" style="left:220px;top:533px;width:22px;height:18px;background:rgb(0, 255, 255);border:1px solid #2b2b2b"></div>
<div class="a" style="left:220px;top:557px;width:22px;height:18px;background:rgb(85, 255, 0);border:1px solid #2b2b2b"></div>
<div class="a" style="left:220px;top:581px;width:22px;height:18px;background:rgb(85, 255, 127);border:1px solid #2b2b2b"></div>
<div class="a" style="left:220px;top:605px;width:22px;height:18px;background:rgb(85, 255, 255);border:1px solid #2b2b2b"></div>
<div class="a" style="left:248px;top:485px;width:22px;height:18px;background:rgb(170, 255, 0);border:1px solid #2b2b2b"></div>
<div class="a" style="left:248px;top:509px;width:22px;height:18px;background:rgb(170, 255, 127);border:1px solid #2b2b2b"></div>
<div class="a" style="left:248px;top:533px;width:22px;height:18px;background:rgb(170, 255, 255);border:1px solid #2b2b2b"></div>
<div class="a" style="left:248px;top:557px;width:22px;height:18px;background:rgb(255, 255, 0);border:1px solid #2b2b2b"></div>
<div class="a" style="left:248px;top:581px;width:22px;height:18px;background:rgb(255, 255, 127);border:1px solid #2b2b2b"></div>
<div class="a" style="left:248px;top:605px;width:22px;height:18px;background:rgb(255, 255, 255);border:1px solid #2b2b2b"></div>
<div class="t " style="left:49px;top:679px;">Custom colors</div>
<div class="a" style="left:52px;top:705px;width:22px;height:18px;background:#fff;border:1px solid #2b2b2b"></div>
<div class="a" style="left:80px;top:705px;width:22px;height:18px;background:#fff;border:1px solid #2b2b2b"></div>
<div class="a" style="left:108px;top:705px;width:22px;height:18px;background:#fff;border:1px solid #2b2b2b"></div>
<div class="a" style="left:136px;top:705px;width:22px;height:18px;background:#fff;border:1px solid #2b2b2b"></div>
<div class="a" style="left:164px;top:705px;width:22px;height:18px;background:#fff;border:1px solid #2b2b2b"></div>
<div class="a" style="left:192px;top:705px;width:22px;height:18px;background:#fff;border:1px solid #2b2b2b"></div>
<div class="a" style="left:220px;top:705px;width:22px;height:18px;background:#fff;border:1px solid #2b2b2b"></div>
<div class="a" style="left:248px;top:705px;width:22px;height:18px;background:#fff;border:1px solid #2b2b2b"></div>
<div class="a" style="left:52px;top:729px;width:22px;height:18px;background:#fff;border:1px solid #2b2b2b"></div>
<div class="a" style="left:80px;top:729px;width:22px;height:18px;background:#fff;border:1px solid #2b2b2b"></div>
<div class="a" style="left:108px;top:729px;width:22px;height:18px;background:#fff;border:1px solid #2b2b2b"></div>
<div class="a" style="left:136px;top:729px;width:22px;height:18px;background:#fff;border:1px solid #2b2b2b"></div>
<div class="a" style="left:164px;top:729px;width:22px;height:18px;background:#fff;border:1px solid #2b2b2b"></div>
<div class="a" style="left:192px;top:729px;width:22px;height:18px;background:#fff;border:1px solid #2b2b2b"></div>
<div class="a" style="left:220px;top:729px;width:22px;height:18px;background:#fff;border:1px solid #2b2b2b"></div>
<div class="a" style="left:248px;top:729px;width:22px;height:18px;background:#fff;border:1px solid #2b2b2b"></div>
<div class="a" style="left:50px;top:757px;width:222px;height:24px;background:linear-gradient(#464646,#3c3c3c);border:1px solid #262626;box-shadow:inset 0 0 0 1px #555;border-radius:3px"></div>
<div class="t " style="left:87px;top:760px;"><u>A</u>dd to Custom Colors</div>
<div class="a" style="left:291px;top:462px;width:222px;height:202px;border:1px solid #f0f0f0;background:linear-gradient(to bottom,rgba(200,200,200,0),rgb(200,200,200)),linear-gradient(to right,rgb(200,0,0),rgb(200,0,200) 16.667%,rgb(0,0,200) 33.333%,rgb(0,200,200) 50%,rgb(0,200,0) 66.667%,rgb(200,200,0) 83.333%,rgb(200,0,0))"></div>
<div class="a" style="left:511px;top:653px;width:2px;height:11px;background:#000"></div>
<div class="a" style="left:502px;top:662px;width:11px;height:2px;background:#000"></div>
<div class="a" style="left:531px;top:462px;width:15px;height:202px;border:1px solid #f0f0f0;background:linear-gradient(#fff,#000)"></div>
<svg class="a" style="left:545px;top:655px" width="8" height="13"><path d="M1 6.5 L7 1 L7 12 Z" fill="#fff"/></svg>
<div class="a" style="left:285px;top:679px;width:60px;height:96px;background:#000;border:1px solid #e0e0e0"></div>
<div class="a" style="left:390px;top:681px;width:55px;height:23px;background:#191919;border-radius:3px"></div>
<div class="a" style="left:431px;top:681px;width:14px;height:23px;background:#404040;border:1px solid #2a2a2a;box-shadow:inset 0 0 0 1px #4e4e4e;border-radius:0 3px 3px 0"></div>
<svg class="a" style="left:431px;top:681px" width="14" height="23"><path d="M3 9 L7 4.5 L11 9Z" fill="#d8d8d8"/><path d="M3 14 L7 18.5 L11 14Z" fill="#8a8a8a"/></svg>
<div class="t " style="left:395px;top:684px;">0</div>
<div class="a" style="left:502px;top:681px;width:55px;height:23px;background:#191919;border-radius:3px"></div>
<div class="a" style="left:543px;top:681px;width:14px;height:23px;background:#404040;border:1px solid #2a2a2a;box-shadow:inset 0 0 0 1px #4e4e4e;border-radius:0 3px 3px 0"></div>
<svg class="a" style="left:543px;top:681px" width="14" height="23"><path d="M3 9 L7 4.5 L11 9Z" fill="#d8d8d8"/><path d="M3 14 L7 18.5 L11 14Z" fill="#8a8a8a"/></svg>
<div class="t " style="left:507px;top:684px;">0</div>
<div class="t" style="right:915px;top:684px">Hu<u>e</u>:</div>
<div class="t" style="right:802px;top:684px"><u>R</u>ed:</div>
<div class="a" style="left:390px;top:713px;width:55px;height:23px;background:#191919;border-radius:3px"></div>
<div class="a" style="left:431px;top:713px;width:14px;height:23px;background:#404040;border:1px solid #2a2a2a;box-shadow:inset 0 0 0 1px #4e4e4e;border-radius:0 3px 3px 0"></div>
<svg class="a" style="left:431px;top:713px" width="14" height="23"><path d="M3 9 L7 4.5 L11 9Z" fill="#d8d8d8"/><path d="M3 14 L7 18.5 L11 14Z" fill="#8a8a8a"/></svg>
<div class="t " style="left:395px;top:716px;">0</div>
<div class="a" style="left:502px;top:713px;width:55px;height:23px;background:#191919;border-radius:3px"></div>
<div class="a" style="left:543px;top:713px;width:14px;height:23px;background:#404040;border:1px solid #2a2a2a;box-shadow:inset 0 0 0 1px #4e4e4e;border-radius:0 3px 3px 0"></div>
<svg class="a" style="left:543px;top:713px" width="14" height="23"><path d="M3 9 L7 4.5 L11 9Z" fill="#d8d8d8"/><path d="M3 14 L7 18.5 L11 14Z" fill="#8a8a8a"/></svg>
<div class="t " style="left:507px;top:716px;">0</div>
<div class="t" style="right:915px;top:716px"><u>S</u>at:</div>
<div class="t" style="right:802px;top:716px"><u>G</u>reen:</div>
<div class="a" style="left:390px;top:745px;width:55px;height:23px;background:#191919;border-radius:3px"></div>
<div class="a" style="left:431px;top:745px;width:14px;height:23px;background:#404040;border:1px solid #2a2a2a;box-shadow:inset 0 0 0 1px #4e4e4e;border-radius:0 3px 3px 0"></div>
<svg class="a" style="left:431px;top:745px" width="14" height="23"><path d="M3 9 L7 4.5 L11 9Z" fill="#d8d8d8"/><path d="M3 14 L7 18.5 L11 14Z" fill="#8a8a8a"/></svg>
<div class="t " style="left:395px;top:748px;">0</div>
<div class="a" style="left:502px;top:745px;width:55px;height:23px;background:#191919;border-radius:3px"></div>
<div class="a" style="left:543px;top:745px;width:14px;height:23px;background:#404040;border:1px solid #2a2a2a;box-shadow:inset 0 0 0 1px #4e4e4e;border-radius:0 3px 3px 0"></div>
<svg class="a" style="left:543px;top:745px" width="14" height="23"><path d="M3 9 L7 4.5 L11 9Z" fill="#d8d8d8"/><path d="M3 14 L7 18.5 L11 14Z" fill="#8a8a8a"/></svg>
<div class="t " style="left:507px;top:748px;">0</div>
<div class="t" style="right:915px;top:748px"><u>V</u>al:</div>
<div class="t" style="right:802px;top:748px">Bl<u>u</u>e:</div>
<div class="a" style="left:399px;top:787px;width:78px;height:25px;background:linear-gradient(#464646,#3c3c3c);border:1px solid #262626;box-shadow:inset 0 0 0 1px #555;border-radius:3px"></div>
<div class="t " style="left:412px;top:791px;"><u>C</u>ancel</div>
<div class="a" style="left:484px;top:787px;width:80px;height:25px;background:linear-gradient(#52575f,#464a51);border:1px solid #4b9be6;box-shadow:inset 0 0 0 1px #5e5e5e;border-radius:3px"></div>
<div class="t " style="left:513px;top:791px;"><u>O</u>K</div>
</body></html>
